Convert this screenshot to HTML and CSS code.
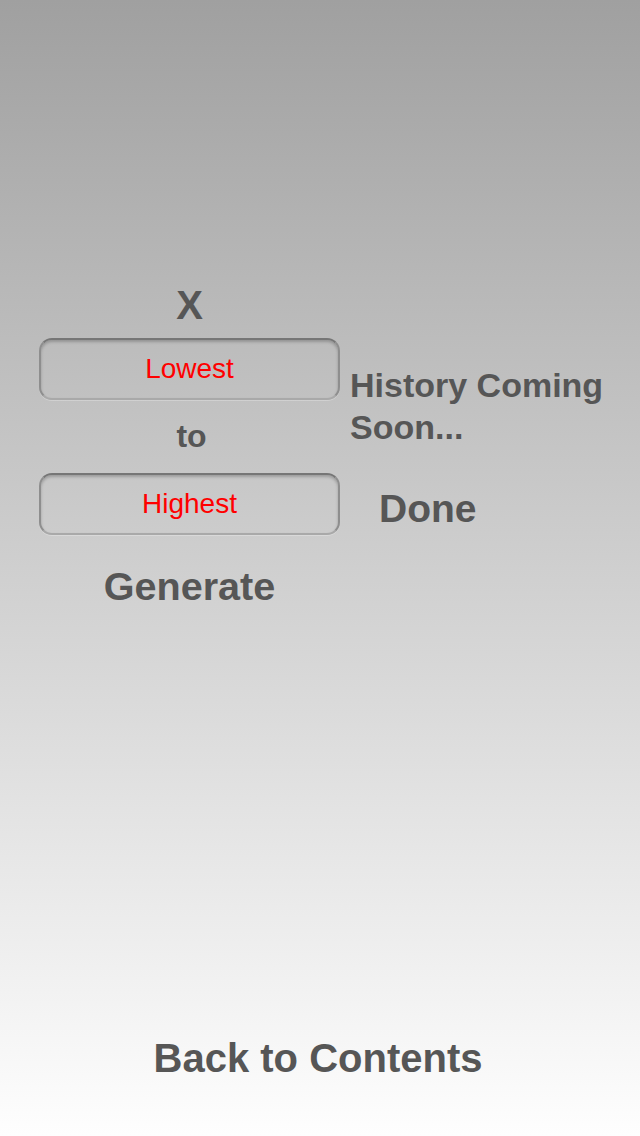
FILE: index.html
```html
<!DOCTYPE html>
<html>
<head>
<meta charset="utf-8">
<link rel="stylesheet" href="styles.css">
</head>
<body>
<div class="page">
  <div class="main">
    <div class="left">
      <div class="title">X</div>
      <div class="field">Lowest</div>
      <div class="to">to</div>
      <div class="field field-2">Highest</div>
      <div class="generate">Generate</div>
    </div>
    <div class="right">
      <div class="history">History Coming<br>Soon...</div>
      <div class="done">Done</div>
    </div>
  </div>
  <div class="footer">Back to Contents</div>
</div>
</body>
</html>
```
FILE: styles.css
```css
html, body {
  margin: 0;
  padding: 0;
}
body {
  width: 640px;
  height: 1136px;
  overflow: hidden;
  background: linear-gradient(to bottom, #a0a0a0 0%, #fefefe 100%);
  font-family: "Liberation Sans", Arial, sans-serif;
  color: #565656;
}
.page {
  height: 1136px;
  display: flex;
  flex-direction: column;
}
.main {
  display: flex;
  flex-direction: row;
  padding-left: 39px;
  gap: 10px;
}
.left {
  width: 301px;
  display: flex;
  flex-direction: column;
  align-items: center;
  padding-top: 285px;
}
.title {
  font-size: 40px;
  line-height: 40px;
  font-weight: bold;
}
.field {
  box-sizing: border-box;
  width: 301px;
  height: 62px;
  margin-top: 13px;
  border-radius: 13px;
  border: 2px solid #8e8e8e;
  border-top-color: #767676;
  border-bottom-color: #a9a9a9;
  box-shadow: inset 0 2px 3px rgba(0, 0, 0, 0.22), 0 1px 0 rgba(255, 255, 255, 0.25);
  display: flex;
  align-items: center;
  justify-content: center;
  color: #ff0000;
  font-size: 28px;
  line-height: 28px;
  font-weight: normal;
}
.to {
  margin-top: 20px;
  margin-left: 4px;
  font-size: 32px;
  line-height: 32px;
  font-weight: bold;
}
.field-2 {
  margin-top: 21px;
}
.generate {
  margin-top: 31px;
  font-size: 39.6px;
  line-height: 40px;
  font-weight: bold;
}
.right {
  padding-top: 364px;
  display: flex;
  flex-direction: column;
}
.history {
  font-size: 34px;
  line-height: 42px;
  font-weight: bold;
}
.done {
  margin-top: 41px;
  margin-left: 29px;
  font-size: 39px;
  line-height: 40px;
  font-weight: bold;
}
.footer {
  margin-top: auto;
  margin-bottom: 58px;
  text-align: center;
  font-size: 40px;
  line-height: 40px;
  font-weight: bold;
  padding-right: 4px;
}
```
